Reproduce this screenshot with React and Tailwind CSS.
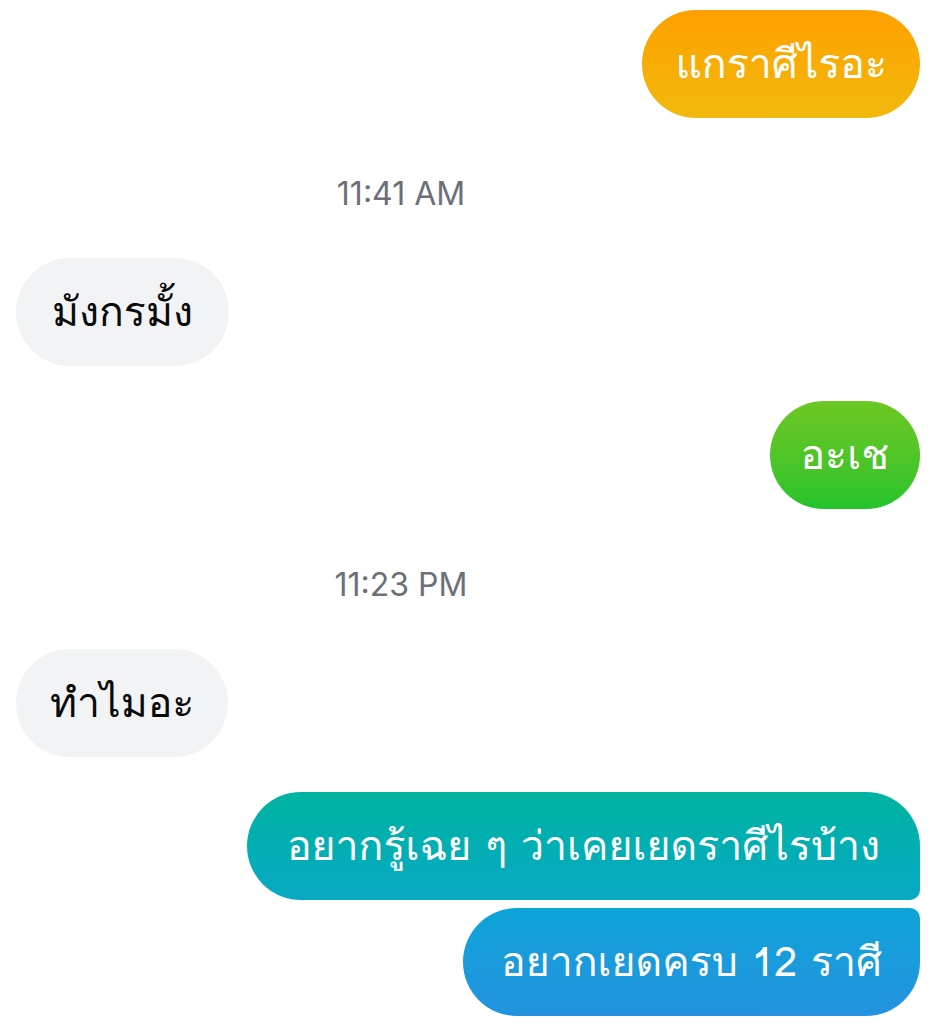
export default function App() {
  const thai = { fontFamily: 'Loma, "Noto Sans Thai Looped", "Noto Sans Thai", sans-serif' };
  return (
    <div className="w-[943px] h-[1024px] bg-white overflow-hidden" style={thai}>
      <div className="flex flex-col pt-[10px]">
        {/* outgoing */}
        <div className="flex justify-end pr-[23px]">
          <div className="h-[108px] px-[33px] rounded-full flex items-center text-white text-[41px] bg-gradient-to-b from-[#ffa000] to-[#f0b90b]">
            แกราศีไรอะ
          </div>
        </div>

        <div className="w-[802px] flex justify-center mt-[58px] h-[36px] items-center text-[32px] text-[#6b6f78] font-['Inter']">
          11:41 AM
        </div>

        <div className="flex justify-start pl-[16px] mt-[46px]">
          <div className="h-[108px] px-[36px] rounded-full flex items-center text-[#0a0a0a] text-[41px] bg-[#f1f3f5]">
            มังกรมั้ง
          </div>
        </div>

        <div className="flex justify-end pr-[23px] mt-[35px]">
          <div className="h-[108px] px-[31px] rounded-full flex items-center text-white text-[41px] bg-gradient-to-b from-[#6cc723] to-[#22c32c]">
            อะเช
          </div>
        </div>

        <div className="w-[802px] flex justify-center mt-[58px] h-[36px] items-center text-[32px] text-[#6b6f78] font-['Inter']">
          11:23 PM
        </div>

        <div className="flex justify-start pl-[16px] mt-[46px]">
          <div className="h-[108px] px-[34px] rounded-full flex items-center text-[#0a0a0a] text-[41px] bg-[#f1f3f5]">
            ทำไมอะ
          </div>
        </div>

        <div className="flex flex-col items-end pr-[23px] mt-[35px] gap-[8px]">
          <div className="h-[108px] px-[40px] rounded-l-[54px] rounded-tr-[54px] rounded-br-[10px] flex items-center text-white text-[41px] bg-gradient-to-b from-[#00b3a0] to-[#0aa9c4]">
            อยากรู้เฉย ๆ ว่าเคยเยดราศีไรบ้าง
          </div>
          <div className="h-[108px] px-[38px] rounded-l-[54px] rounded-tr-[10px] rounded-br-[54px] flex items-center text-white text-[41px] bg-gradient-to-b from-[#0ba4d8] to-[#2392e0]">
            อยากเยดครบ 12 ราศี
          </div>
        </div>
      </div>
    </div>
  );
}
